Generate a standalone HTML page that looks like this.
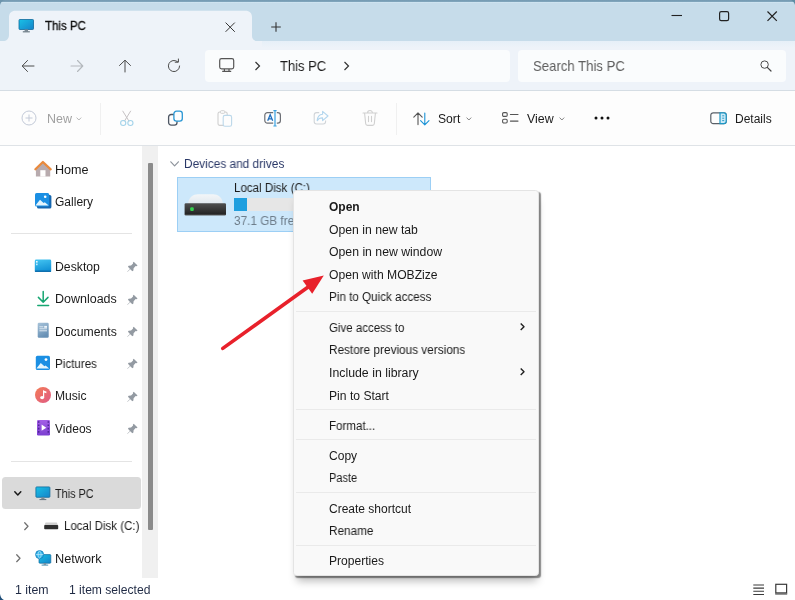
<!DOCTYPE html>
<html lang="en"><head><meta charset="utf-8"><title>This PC</title>
<style>
html,body{margin:0;padding:0;background:#fff;}
body{width:795px;height:600px;overflow:hidden;font-family:"Liberation Sans",sans-serif;font-size:12px;}
#win{position:relative;width:795px;height:600px;overflow:hidden;background:#fff;}
.a{position:absolute;}
.t{position:absolute;white-space:pre;transform-origin:0 50%;will-change:transform;}
svg{position:absolute;overflow:visible;}

</style></head>
<body>
<div id="win">
<div class="a" style="left:0px;top:0px;width:795px;height:41px;background:#c6dcea;"></div>
<div class="a" style="left:0px;top:0px;width:795px;height:3.2px;background:linear-gradient(#7399b1 0%,#7fa4bb 50%,#cfe4f1 62%,#cde2ef 100%);"></div>
<svg style="left:0px;top:0px" width="5" height="5" viewBox="0 0 5 5"><path d="M0 0 H5 C2.5 0.4 0.6 2.4 0 5 Z" fill="#6d95ad"/></svg>
<svg style="left:790px;top:0px" width="5" height="5" viewBox="0 0 5 5"><path d="M5 0 H0 C2.5 0.4 4.4 2.4 5 5 Z" fill="#5d8ea3"/></svg>
<svg style="left:0;top:0" width="270" height="42" viewBox="0 0 270 42"><path d="M0 41.2 H3 C6.5 41.2 9 38.5 9 35 V17 C9 13 11.5 10.7 15.5 10.7 H245.5 C249.5 10.7 252 13 252 17 V36 C252 39 254.2 41.2 257.5 41.2 H262 V42 H0 Z" fill="#eef3f9"/></svg>
<svg style="left:18px;top:18px" width="17" height="16" viewBox="0 0 17 16"><defs><linearGradient id="mon" x1="0" y1="0" x2="1" y2="1"><stop offset="0" stop-color="#19c1e6"/><stop offset="1" stop-color="#1583c9"/></linearGradient></defs><rect x="1" y="1.5" width="14.5" height="10" rx="0.8" fill="url(#mon)" stroke="#0f6a9c" stroke-width="0.8"/><rect x="6.6" y="11.5" width="3.4" height="2" fill="#7c8a94"/><rect x="4.8" y="13.2" width="7" height="1.2" fill="#6b7a85"/></svg>
<span class="t" style="left:45.0px;top:18.2px;font-size:12px;color:#111;line-height:16px;transform:scaleX(0.9581);-webkit-text-stroke:0.3px #111;">This PC</span><svg style="left:225px;top:21.5px" width="10.4" height="10.4" viewBox="0 0 10.4 10.4"><path d="M0.6 0.6 L9.8 9.8 M9.8 0.6 L0.6 9.8" stroke="#333" stroke-width="1" fill="none"/></svg>
<svg style="left:270.5px;top:21.5px" width="10" height="10" viewBox="0 0 10 10"><path d="M5 0.2 V9.8 M0.2 5 H9.8" stroke="#333" stroke-width="1.1" fill="none"/></svg>
<svg style="left:671px;top:10.3px" width="12" height="12" viewBox="0 0 12 12"><path d="M0.5 5.5 H11" stroke="#222" stroke-width="1.1"/></svg>
<svg style="left:719.3px;top:11px" width="11" height="11" viewBox="0 0 11 11"><rect x="0.6" y="0.6" width="9" height="9" rx="1.6" fill="none" stroke="#222" stroke-width="1.2"/></svg>
<svg style="left:767.3px;top:11px" width="10" height="10" viewBox="0 0 10 10"><path d="M0.5 0.5 L9.8 9.8 M9.8 0.5 L0.5 9.8" stroke="#222" stroke-width="1.2" fill="none"/></svg>
<div class="a" style="left:0px;top:41px;width:795px;height:49px;background:#eef3f9;"></div>
<div class="a" style="left:262px;top:41px;width:533px;height:7px;background:linear-gradient(#e6f0f8,#eef3f9);"></div>
<div class="a" style="left:0px;top:90px;width:795px;height:1px;background:#d5dde4;"></div>
<svg style="left:21px;top:59px" width="14" height="14" viewBox="0 0 14 14"><path d="M13 7 H1.5 M6.5 1.5 L1.2 7 L6.5 12.5" stroke="#4c4c4c" stroke-width="1" fill="none" stroke-linecap="round" stroke-linejoin="round"/></svg>
<svg style="left:70px;top:59px" width="14" height="14" viewBox="0 0 14 14"><path d="M1 7 H12.5 M7.5 1.5 L12.8 7 L7.5 12.5" stroke="#b3b8bd" stroke-width="1.1" fill="none" stroke-linecap="round" stroke-linejoin="round"/></svg>
<svg style="left:118px;top:59px" width="14" height="14" viewBox="0 0 14 14"><path d="M7 13 V1.5 M1.5 6.5 L7 1.2 L12.5 6.5" stroke="#4c4c4c" stroke-width="1" fill="none" stroke-linecap="round" stroke-linejoin="round"/></svg>
<svg style="left:167px;top:59px" width="14" height="14" viewBox="0 0 14 14"><path d="M12.6 7 A5.6 5.6 0 1 1 10.6 2.7" stroke="#4c4c4c" stroke-width="1" fill="none" stroke-linecap="round"/><path d="M8.2 3.2 H11.4 V0" stroke="#4c4c4c" stroke-width="1" fill="none" stroke-linecap="round" stroke-linejoin="round"/></svg>
<div class="a" style="left:205px;top:50px;width:305px;height:32px;background:#fafcfd;border-radius:4px;"></div>
<svg style="left:219px;top:58px" width="16" height="15" viewBox="0 0 16 15"><rect x="0.7" y="0.7" width="14" height="10.2" rx="1.8" fill="none" stroke="#555" stroke-width="1.2"/><path d="M5.4 11 V13 M10 11 V13 M3.2 13.4 H12.2" stroke="#555" stroke-width="1.2" fill="none"/></svg>
<svg style="left:254px;top:61px" width="7" height="10" viewBox="0 0 7 10"><path d="M1.5 1 L5.5 5 L1.5 9" stroke="#333" stroke-width="1.2" fill="none"/></svg>
<span class="t" style="left:279.6px;top:58.4px;font-size:14.3px;color:#1d1d1d;line-height:16px;transform:scaleX(0.9087);">This PC</span><svg style="left:343px;top:61px" width="7" height="10" viewBox="0 0 7 10"><path d="M1.5 1 L5.5 5 L1.5 9" stroke="#333" stroke-width="1.2" fill="none"/></svg>
<div class="a" style="left:518px;top:50px;width:267.5px;height:32px;background:#fafcfd;border-radius:4px;"></div>
<span class="t" style="left:532.8px;top:58.4px;font-size:14.3px;color:#5e5e5e;line-height:16px;transform:scaleX(0.9203);">Search This PC</span><svg style="left:760px;top:60px" width="12" height="12" viewBox="0 0 12 12"><circle cx="4.6" cy="4.6" r="3.7" fill="none" stroke="#4c4c4c" stroke-width="1"/><path d="M7.3 7.3 L11 11" stroke="#444" stroke-width="1.2" stroke-linecap="round"/></svg>
<div class="a" style="left:0px;top:91px;width:795px;height:54px;background:#fdfdfd;"></div>
<div class="a" style="left:0px;top:145px;width:795px;height:1px;background:#dfe3e7;"></div>
<svg style="left:21px;top:110px" width="16" height="16" viewBox="0 0 16 16"><circle cx="8" cy="8" r="7" fill="none" stroke="#c3cad8" stroke-width="1"/><path d="M8 4.5 V11.5 M4.5 8 H11.5" stroke="#c3cad8" stroke-width="1"/></svg>
<span class="t" style="left:46.5px;top:110.7px;font-size:12px;color:#a0a0a0;line-height:16px;transform:scaleX(1.0368);">New</span><svg style="left:76.4px;top:116.6px" width="6" height="4" viewBox="0 0 6 4"><path d="M0.6 0.6 L2.9 3 L5.2 0.6" stroke="#b0b0b0" stroke-width="0.9" fill="none"/></svg>
<div class="a" style="left:100px;top:103px;width:1px;height:32px;background:#f0f0f0;"></div>
<svg style="left:118.5px;top:110px" width="16" height="17" viewBox="0 0 16 17"><path d="M3.6 0.8 L10 11.2 M11.8 0.8 L5.4 11.2" stroke="#c6c2c4" stroke-width="1" fill="none"/><ellipse cx="4.2" cy="13" rx="2.6" ry="2.5" fill="none" stroke="#a3d3ea" stroke-width="1.1"/><ellipse cx="11.4" cy="13" rx="2.6" ry="2.5" fill="none" stroke="#a3d3ea" stroke-width="1.1"/></svg>
<svg style="left:167px;top:110px" width="17" height="17" viewBox="0 0 17 17"><rect x="1.6" y="4.5" width="8.4" height="10.6" rx="2.6" fill="none" stroke="#4d5663" stroke-width="1.3"/><rect x="6.9" y="1.2" width="8.4" height="10" rx="2.6" fill="#fdfdfd" stroke="#2a97d4" stroke-width="1.3"/></svg>
<svg style="left:216.5px;top:110px" width="16" height="17" viewBox="0 0 16 17"><rect x="1" y="2" width="9.2" height="13.4" rx="1.8" fill="none" stroke="#d0d0d0" stroke-width="1.1"/><rect x="3.4" y="0.7" width="4.4" height="2.6" rx="1" fill="#fdfdfd" stroke="#d0d0d0" stroke-width="1"/><rect x="6.2" y="5.4" width="8.4" height="10.8" rx="1.8" fill="#fdfdfd" stroke="#bcd8ea" stroke-width="1.1"/></svg>
<svg style="left:264px;top:110px" width="18" height="17" viewBox="0 0 18 17"><rect x="0.8" y="2.6" width="15.6" height="10.6" rx="2.6" fill="none" stroke="#6c6f75" stroke-width="1.2"/><rect x="9.2" y="0" width="3.6" height="17" fill="#fdfdfd"/><path d="M11 0.8 V15.8 M9.4 0.6 H12.6 M9.4 16 H12.6" stroke="#38a1e0" stroke-width="1.2" fill="none"/><path d="M3.7 10.8 L6.2 4.8 L8.7 10.8 M4.6 8.8 H7.8" stroke="#1f6fbf" stroke-width="1.3" fill="none"/></svg>
<svg style="left:313px;top:110px" width="17" height="16" viewBox="0 0 17 16"><path d="M6.2 2.6 H3.6 C2.2 2.6 1.2 3.6 1.2 5 V11.6 C1.2 13 2.2 14 3.6 14 H10.2 C11.6 14 12.6 13 12.6 11.6 V10.6" fill="none" stroke="#d0d4d8" stroke-width="1.1"/><path d="M9.6 1.4 L15 6 L9.6 10.6 V7.9 C7 7.8 5.4 8.6 4.2 10.6 C4.4 7 6.3 4.5 9.6 4.2 Z" fill="none" stroke="#b3d6ee" stroke-width="1.1" stroke-linejoin="round"/></svg>
<svg style="left:362px;top:109px" width="16" height="18" viewBox="0 0 16 18"><path d="M1 4 H15 M5.6 3.8 C5.6 0.8 10.4 0.8 10.4 3.8 M2.6 4.2 L3.7 14.8 C3.8 15.8 4.5 16.4 5.5 16.4 H10.5 C11.5 16.4 12.2 15.8 12.3 14.8 L13.4 4.2 M6.5 7.4 V12.6 M9.5 7.4 V12.6" fill="none" stroke="#d0d0d0" stroke-width="1.1" stroke-linecap="round"/></svg>
<div class="a" style="left:396px;top:103px;width:1px;height:32px;background:#f0f0f0;"></div>
<svg style="left:412.5px;top:111.5px" width="18" height="14" viewBox="0 0 18 14"><path d="M5 12.6 V1 M0.8 5.2 L5 0.9 L9.2 5.2" stroke="#555" stroke-width="1.1" fill="none" stroke-linecap="round" stroke-linejoin="round"/><path d="M11.8 1 V12.8 M7.6 8.6 L11.8 12.9 L16 8.6" stroke="#1b93d6" stroke-width="1.1" fill="none" stroke-linecap="round" stroke-linejoin="round"/></svg>
<span class="t" style="left:437.7px;top:110.7px;font-size:12px;color:#1b1b1b;line-height:16px;transform:scaleX(1.0129);">Sort</span><svg style="left:465.8px;top:116.6px" width="6" height="4" viewBox="0 0 6 4"><path d="M0.6 0.6 L2.9 3 L5.2 0.6" stroke="#777" stroke-width="0.9" fill="none"/></svg>
<svg style="left:501.5px;top:112px" width="17" height="12" viewBox="0 0 17 12"><rect x="0.6" y="0.6" width="4.6" height="3.8" rx="1.2" fill="none" stroke="#555" stroke-width="1.1"/><rect x="0.6" y="7.2" width="4.6" height="3.8" rx="1.2" fill="none" stroke="#555" stroke-width="1.1"/><path d="M8.4 2.5 H16 M8.4 9.1 H16" stroke="#555" stroke-width="1.1" stroke-linecap="round"/></svg>
<span class="t" style="left:526.5px;top:110.7px;font-size:12px;color:#1b1b1b;line-height:16px;transform:scaleX(1.0311);">View</span><svg style="left:558.6px;top:116.6px" width="6" height="4" viewBox="0 0 6 4"><path d="M0.6 0.6 L2.9 3 L5.2 0.6" stroke="#777" stroke-width="0.9" fill="none"/></svg>
<svg style="left:594px;top:116px" width="16" height="4" viewBox="0 0 16 4"><circle cx="2" cy="2" r="1.5" fill="#111"/><circle cx="8" cy="2" r="1.5" fill="#111"/><circle cx="14" cy="2" r="1.5" fill="#111"/></svg>
<svg style="left:709.5px;top:111.6px" width="18" height="13" viewBox="0 0 18 13"><rect x="0.8" y="0.8" width="15.4" height="10.8" rx="2.4" fill="none" stroke="#5a6068" stroke-width="1.2"/><path d="M10 0.8 H13.8 C15.2 0.8 16.2 1.8 16.2 3.2 V9.2 C16.2 10.6 15.2 11.6 13.8 11.6 H10 Z" fill="#cdeaf7" stroke="#1c97c6" stroke-width="1.2"/><path d="M12.2 3.8 H14.2 M12.2 6.2 H14.2 M12.2 8.6 H14.2" stroke="#1c97c6" stroke-width="0.9"/></svg>
<span class="t" style="left:734.6px;top:110.7px;font-size:12px;color:#1b1b1b;line-height:16px;transform:scaleX(0.9976);">Details</span><div class="a" style="left:142px;top:146px;width:16px;height:432px;background:#f0f0f0;"></div>
<div class="a" style="left:147.5px;top:163px;width:5px;height:366.5px;background:#8b8b8b;border-radius:1px;"></div>
<div class="a" style="left:11px;top:233px;width:121px;height:1px;background:#e4e4e4;"></div>
<div class="a" style="left:11px;top:460.5px;width:121px;height:1px;background:#e4e4e4;"></div>
<div class="a" style="left:2.2px;top:477px;width:138.8px;height:31.5px;background:#dadada;border-radius:3.5px;"></div>
<svg style="left:34px;top:160px" width="18" height="17" viewBox="0 0 18 17"><path d="M1.9 8.4 L8.9 2 L16.2 8.4 V16.6 H1.9 Z" fill="#b8abae"/><path d="M6.3 10.2 H11.5 V16.6 H6.3 Z" fill="#fff"/><path d="M1.4 9.3 L8.9 2 L16.7 9.3" fill="none" stroke="#e98a3d" stroke-width="2.3" stroke-linecap="round" stroke-linejoin="round"/></svg>
<span class="t" style="left:54.8px;top:161.7px;font-size:12px;color:#1b1b1b;line-height:16px;transform:scaleX(1.0495);">Home</span><svg style="left:34px;top:192px" width="18" height="17" viewBox="0 0 18 17"><rect x="3" y="3" width="14.4" height="13.6" rx="1.6" fill="#1667b0"/><rect x="1" y="1" width="14.2" height="13.6" rx="1.6" fill="#1b8fe3"/><path d="M1.8 13 L6 7.8 L9.6 11 L10.8 10.2 L14.4 13.2 V13.6 H1.8 Z" fill="#e4f5fd"/><circle cx="11.2" cy="4.8" r="1.3" fill="#fff"/></svg>
<span class="t" style="left:54.8px;top:193.7px;font-size:12px;color:#1b1b1b;line-height:16px;transform:scaleX(1.0022);">Gallery</span><svg style="left:34px;top:259px" width="18" height="14" viewBox="0 0 18 14"><defs><linearGradient id="dsk" x1="0" y1="0" x2="0.3" y2="1"><stop offset="0" stop-color="#45c6f2"/><stop offset="1" stop-color="#1292d6"/></linearGradient></defs><rect x="0.8" y="0.5" width="16.4" height="12.6" rx="1.4" fill="url(#dsk)"/><rect x="0.8" y="11.4" width="16.4" height="1.7" rx="0.8" fill="#0f6fae"/><rect x="2" y="2" width="1.6" height="1.6" fill="#e8f8ff"/><rect x="2" y="4.6" width="1.6" height="1.6" fill="#bfeaff"/></svg>
<span class="t" style="left:54.8px;top:258.7px;font-size:12px;color:#1b1b1b;line-height:16px;transform:scaleX(1.0197);">Desktop</span><svg style="left:127.4px;top:261.1px" width="11.2" height="11.2" viewBox="0 0 10.5 10.5"><path d="M6.3 0.6 L9.9 4.2 L8.9 5 L8.1 4.8 L6.2 6.7 L6 9 L5 9.6 L3.1 7.7 L0.6 10.2 L0.3 10.2 L0.3 9.9 L2.8 7.4 L0.9 5.5 L1.5 4.5 L3.8 4.3 L5.7 2.4 L5.5 1.6 Z" fill="#939aa2"/></svg>
<svg style="left:37px;top:291px" width="13" height="16" viewBox="0 0 13 16"><path d="M6.2 0.6 V11 M1.4 6.4 L6.2 11.2 L11 6.4 M0.8 14.6 H11.6" fill="none" stroke="#17a672" stroke-width="1.5" stroke-linecap="round" stroke-linejoin="round"/></svg>
<span class="t" style="left:54.8px;top:291.2px;font-size:12px;color:#1b1b1b;line-height:16px;transform:scaleX(1.0408);">Downloads</span><svg style="left:127.4px;top:293.6px" width="11.2" height="11.2" viewBox="0 0 10.5 10.5"><path d="M6.3 0.6 L9.9 4.2 L8.9 5 L8.1 4.8 L6.2 6.7 L6 9 L5 9.6 L3.1 7.7 L0.6 10.2 L0.3 10.2 L0.3 9.9 L2.8 7.4 L0.9 5.5 L1.5 4.5 L3.8 4.3 L5.7 2.4 L5.5 1.6 Z" fill="#939aa2"/></svg>
<svg style="left:37px;top:322px" width="13" height="17" viewBox="0 0 13 17"><defs><linearGradient id="doc" x1="0" y1="0" x2="0.4" y2="1"><stop offset="0" stop-color="#a9c4da"/><stop offset="1" stop-color="#6790b5"/></linearGradient></defs><rect x="0.7" y="0.7" width="11" height="15" rx="1.2" fill="url(#doc)"/><path d="M2.4 4.8 H6.4 M2.4 6.8 H10 M2.4 8.8 H10" stroke="#dfe9f2" stroke-width="1"/><rect x="7.2" y="3.9" width="2.8" height="1.9" fill="#eef4f9"/></svg>
<span class="t" style="left:54.8px;top:323.7px;font-size:12px;color:#1b1b1b;line-height:16px;transform:scaleX(1.0181);">Documents</span><svg style="left:127.4px;top:326.1px" width="11.2" height="11.2" viewBox="0 0 10.5 10.5"><path d="M6.3 0.6 L9.9 4.2 L8.9 5 L8.1 4.8 L6.2 6.7 L6 9 L5 9.6 L3.1 7.7 L0.6 10.2 L0.3 10.2 L0.3 9.9 L2.8 7.4 L0.9 5.5 L1.5 4.5 L3.8 4.3 L5.7 2.4 L5.5 1.6 Z" fill="#939aa2"/></svg>
<svg style="left:35px;top:355px" width="16" height="16" viewBox="0 0 16 16"><rect x="0.8" y="0.8" width="14.2" height="14.2" rx="1.6" fill="#1b8fe3"/><path d="M1.6 13.2 L5.8 8 L9.4 11.2 L10.6 10.4 L14.2 13.4 V13.6 H1.6 Z" fill="#e4f5fd"/><circle cx="11" cy="4.6" r="1.4" fill="#fff"/></svg>
<span class="t" style="left:54.8px;top:355.7px;font-size:12px;color:#1b1b1b;line-height:16px;transform:scaleX(0.9663);">Pictures</span><svg style="left:127.4px;top:358.1px" width="11.2" height="11.2" viewBox="0 0 10.5 10.5"><path d="M6.3 0.6 L9.9 4.2 L8.9 5 L8.1 4.8 L6.2 6.7 L6 9 L5 9.6 L3.1 7.7 L0.6 10.2 L0.3 10.2 L0.3 9.9 L2.8 7.4 L0.9 5.5 L1.5 4.5 L3.8 4.3 L5.7 2.4 L5.5 1.6 Z" fill="#939aa2"/></svg>
<svg style="left:34.8px;top:387.3px" width="16" height="16" viewBox="0 0 16 16"><defs><linearGradient id="mus" x1="0" y1="0" x2="1" y2="1"><stop offset="0" stop-color="#f47c55"/><stop offset="1" stop-color="#df5b86"/></linearGradient></defs><circle cx="8" cy="8" r="8" fill="url(#mus)"/><path d="M8.6 3.6 V10.4" stroke="#fff" stroke-width="1.2"/><path d="M8 3.4 L11.4 4.4 V6.2 L8 5.2 Z" fill="#fff"/><ellipse cx="7.1" cy="10.6" rx="2" ry="1.6" fill="#fff"/></svg>
<span class="t" style="left:54.8px;top:388.2px;font-size:12px;color:#1b1b1b;line-height:16px;transform:scaleX(1.0082);">Music</span><svg style="left:127.4px;top:390.6px" width="11.2" height="11.2" viewBox="0 0 10.5 10.5"><path d="M6.3 0.6 L9.9 4.2 L8.9 5 L8.1 4.8 L6.2 6.7 L6 9 L5 9.6 L3.1 7.7 L0.6 10.2 L0.3 10.2 L0.3 9.9 L2.8 7.4 L0.9 5.5 L1.5 4.5 L3.8 4.3 L5.7 2.4 L5.5 1.6 Z" fill="#939aa2"/></svg>
<svg style="left:36.5px;top:420px" width="13" height="16" viewBox="0 0 13 16"><defs><linearGradient id="vid" x1="0" y1="0" x2="0" y2="1"><stop offset="0" stop-color="#a45fe6"/><stop offset="1" stop-color="#7b3fd0"/></linearGradient></defs><rect x="0" y="0" width="13" height="15.5" rx="1.2" fill="url(#vid)"/><path d="M1.7 1.2 V14.4 M11.3 1.2 V14.4" stroke="#4f2596" stroke-width="1.5" stroke-dasharray="1.6 1.7"/><path d="M4.6 4.6 L9.3 7.7 L4.6 10.8 Z" fill="#fff"/></svg>
<span class="t" style="left:54.8px;top:420.7px;font-size:12px;color:#1b1b1b;line-height:16px;transform:scaleX(1.0032);">Videos</span><svg style="left:127.4px;top:423.1px" width="11.2" height="11.2" viewBox="0 0 10.5 10.5"><path d="M6.3 0.6 L9.9 4.2 L8.9 5 L8.1 4.8 L6.2 6.7 L6 9 L5 9.6 L3.1 7.7 L0.6 10.2 L0.3 10.2 L0.3 9.9 L2.8 7.4 L0.9 5.5 L1.5 4.5 L3.8 4.3 L5.7 2.4 L5.5 1.6 Z" fill="#939aa2"/></svg>
<svg style="left:14px;top:490.5px" width="8" height="6" viewBox="0 0 8 6"><path d="M0.8 0.8 L3.8 4 L6.8 0.8" fill="none" stroke="#1a1a1a" stroke-width="1.5" stroke-linecap="round" stroke-linejoin="round"/></svg>
<svg style="left:35px;top:486px" width="16" height="15" viewBox="0 0 16 15"><rect x="0.9" y="0.9" width="14" height="10.4" rx="0.8" fill="url(#mon)" stroke="#0f6a9c" stroke-width="0.8"/><rect x="6.3" y="11.4" width="3.2" height="1.9" fill="#7c8a94"/><rect x="4.5" y="13" width="6.8" height="1.1" fill="#6b7a85"/></svg>
<span class="t" style="left:54.8px;top:486.2px;font-size:12px;color:#1b1b1b;line-height:16px;transform:scaleX(0.9042);">This PC</span><svg style="left:24px;top:522px" width="5" height="9" viewBox="0 0 5 9"><path d="M0.7 0.7 L4 4.2 L0.7 7.7" fill="none" stroke="#707070" stroke-width="1.25" stroke-linecap="round" stroke-linejoin="round"/></svg>
<svg style="left:44px;top:522px" width="15" height="8" viewBox="0 0 15 8"><path d="M1.6 0.6 H12.8 L14 3.2 H0.4 Z" fill="#cfcfcf"/><rect x="0.2" y="3" width="14" height="4.2" rx="0.8" fill="#2e2e2e"/></svg>
<span class="t" style="left:64.0px;top:518.1px;font-size:12px;color:#1b1b1b;line-height:16px;transform:scaleX(0.9582);">Local Disk (C:)</span><svg style="left:16px;top:554px" width="5" height="9" viewBox="0 0 5 9"><path d="M0.7 0.7 L4 4.2 L0.7 7.7" fill="none" stroke="#707070" stroke-width="1.25" stroke-linecap="round" stroke-linejoin="round"/></svg>
<svg style="left:35px;top:549.5px" width="17" height="17" viewBox="0 0 17 17"><rect x="4" y="4.6" width="11.8" height="8.6" rx="0.8" fill="url(#mon)" stroke="#0f6a9c" stroke-width="0.7"/><rect x="8.6" y="13.2" width="2.6" height="1.6" fill="#7c8a94"/><rect x="6.6" y="14.6" width="6.6" height="1" fill="#4b8fb0"/><circle cx="4.6" cy="4.6" r="4" fill="#35b5ea" stroke="#0f78b8" stroke-width="0.8"/><path d="M0.8 4.6 H8.4 M4.6 0.8 C2.6 3 2.6 6.2 4.6 8.4 M4.6 0.8 C6.6 3 6.6 6.2 4.6 8.4" stroke="#d8f3ff" stroke-width="0.6" fill="none"/></svg>
<span class="t" style="left:54.8px;top:551.2px;font-size:12px;color:#1b1b1b;line-height:16px;transform:scaleX(1.0610);">Network</span><svg style="left:170px;top:161px" width="10" height="7" viewBox="0 0 10 7"><path d="M0.8 0.8 L4.6 4.8 L8.4 0.8" fill="none" stroke="#8e949c" stroke-width="1.2" stroke-linecap="round" stroke-linejoin="round"/></svg>
<span class="t" style="left:183.9px;top:155.7px;font-size:12px;color:#2a3867;line-height:16px;transform:scaleX(0.9892);">Devices and drives</span><div class="a" style="left:176.5px;top:176.5px;width:252.5px;height:53.5px;background:#cde8fb;border:1px solid #9ccff5;box-sizing:content-box;"></div>
<svg style="left:184px;top:192px" width="43" height="26" viewBox="0 0 43 26"><defs><linearGradient id="hd1" x1="0" y1="0" x2="0" y2="1"><stop offset="0" stop-color="#f3f6f8"/><stop offset="1" stop-color="#e2e9ef"/></linearGradient><linearGradient id="hd2" x1="0" y1="0" x2="0" y2="1"><stop offset="0" stop-color="#505050"/><stop offset="0.85" stop-color="#262626"/><stop offset="1" stop-color="#5a5a5a"/></linearGradient></defs><path d="M4 11.5 C5 5 9 2.2 14 2.2 H29 C34 2.2 38 5 39 11.5 Z" fill="url(#hd1)"/><rect x="0.6" y="11.3" width="41.4" height="12.2" rx="1.2" fill="url(#hd2)"/><rect x="6.2" y="15.3" width="3.6" height="3.6" rx="1.2" fill="#35d04f"/></svg>
<span class="t" style="left:234.3px;top:180.3px;font-size:12px;color:#1b1b1b;line-height:16px;transform:scaleX(0.9646);">Local Disk (C:)</span><div class="a" style="left:233.7px;top:197.6px;width:193px;height:13.2px;background:#e6e6e6;"></div>
<div class="a" style="left:233.7px;top:197.6px;width:13.2px;height:13.2px;background:#1f9fdf;"></div>
<span class="t" style="left:234.3px;top:213.1px;font-size:12px;color:#6e7d8a;line-height:16px;transform:scaleX(0.9799);">37.1 GB free of 231 GB</span><span class="t" style="left:14.6px;top:582.2px;font-size:12px;color:#1f2a44;line-height:16px;transform:scaleX(1.0279);">1 item</span><span class="t" style="left:69.2px;top:582.2px;font-size:12px;color:#1f2a44;line-height:16px;transform:scaleX(1.0084);">1 item selected</span><svg style="left:753px;top:583px" width="12" height="13" viewBox="0 0 12 13"><path d="M0.3 2 H11 M0.3 5.15 H11 M0.3 8.3 H11 M0.3 11.45 H11" stroke="#3a3a3a" stroke-width="1.1"/></svg>
<svg style="left:775px;top:583px" width="13" height="13" viewBox="0 0 13 13"><rect x="0.8" y="1.3" width="10.8" height="8.6" fill="none" stroke="#3a3a3a" stroke-width="1.2"/><path d="M0.2 10.9 H12.2" stroke="#6a6a6a" stroke-width="1.6"/></svg>
<svg style="left:0px;top:594px" width="4" height="6" viewBox="0 0 4 6"><path d="M0 0 C0.5 3 1.5 5 4 6 H0 Z" fill="#1f4e79"/></svg>
<div class="a" style="left:292.5px;top:190px;width:244.4px;height:384px;background:#f9f9f9;border:1px solid #e4e4e4;border-radius:3.5px;box-shadow:2px 2px 1.2px -0.6px rgba(0,0,0,0.45),1px 8px 9px -3px rgba(0,0,0,0.28);"></div>
<span class="t" style="left:329.3px;top:199.2px;font-size:12px;color:#1a1a1a;line-height:16px;transform:scaleX(0.9977);font-weight:bold;">Open</span><span class="t" style="left:329.3px;top:221.7px;font-size:12px;color:#1a1a1a;line-height:16px;transform:scaleX(1.0171);">Open in new tab</span><span class="t" style="left:329.3px;top:244.2px;font-size:12px;color:#1a1a1a;line-height:16px;transform:scaleX(1.0214);">Open in new window</span><span class="t" style="left:329.3px;top:266.8px;font-size:12px;color:#1a1a1a;line-height:16px;transform:scaleX(1.0114);">Open with MOBZize</span><span class="t" style="left:329.3px;top:289.4px;font-size:12px;color:#1a1a1a;line-height:16px;transform:scaleX(0.9708);">Pin to Quick access</span><span class="t" style="left:329.3px;top:319.8px;font-size:12px;color:#1a1a1a;line-height:16px;transform:scaleX(0.9580);">Give access to</span><span class="t" style="left:329.3px;top:342.4px;font-size:12px;color:#1a1a1a;line-height:16px;transform:scaleX(0.9817);">Restore previous versions</span><span class="t" style="left:329.3px;top:365.0px;font-size:12px;color:#1a1a1a;line-height:16px;transform:scaleX(1.0266);">Include in library</span><span class="t" style="left:329.3px;top:387.6px;font-size:12px;color:#1a1a1a;line-height:16px;transform:scaleX(1.0105);">Pin to Start</span><span class="t" style="left:329.3px;top:417.8px;font-size:12px;color:#1a1a1a;line-height:16px;transform:scaleX(0.9622);">Format...</span><span class="t" style="left:329.3px;top:448.0px;font-size:12px;color:#1a1a1a;line-height:16px;transform:scaleX(1.0030);">Copy</span><span class="t" style="left:329.3px;top:470.4px;font-size:12px;color:#1a1a1a;line-height:16px;transform:scaleX(0.9157);">Paste</span><span class="t" style="left:329.3px;top:500.6px;font-size:12px;color:#1a1a1a;line-height:16px;transform:scaleX(0.9958);">Create shortcut</span><span class="t" style="left:329.3px;top:523.2px;font-size:12px;color:#1a1a1a;line-height:16px;transform:scaleX(0.9788);">Rename</span><span class="t" style="left:329.3px;top:553.2px;font-size:12px;color:#1a1a1a;line-height:16px;transform:scaleX(1.0054);">Properties</span><div class="a" style="left:296px;top:310.5px;width:240px;height:1px;background:#eaeaea;"></div>
<div class="a" style="left:296px;top:409.3px;width:240px;height:1px;background:#eaeaea;"></div>
<div class="a" style="left:296px;top:438.9px;width:240px;height:1px;background:#eaeaea;"></div>
<div class="a" style="left:296px;top:492.3px;width:240px;height:1px;background:#eaeaea;"></div>
<div class="a" style="left:296px;top:545.3px;width:240px;height:1px;background:#eaeaea;"></div>
<svg style="left:520px;top:322.7px" width="6" height="8" viewBox="0 0 6 8"><path d="M0.7 0.5 L4 3.8 L0.7 7.1" fill="none" stroke="#222" stroke-width="1.4" stroke-linejoin="round"/></svg>
<svg style="left:520px;top:367.7px" width="6" height="8" viewBox="0 0 6 8"><path d="M0.7 0.5 L4 3.8 L0.7 7.1" fill="none" stroke="#222" stroke-width="1.4" stroke-linejoin="round"/></svg>
<svg style="left:0px;top:0px" width="795" height="600" viewBox="0 0 795 600"><path d="M222.8 348.4 L308.5 286.8" stroke="#e8212b" stroke-width="3.6" stroke-linecap="round"/><path d="M323.8 275.4 L302.6 280.6 L312.2 293.8 Z" fill="#e8212b"/></svg>

</div>
</body></html>
